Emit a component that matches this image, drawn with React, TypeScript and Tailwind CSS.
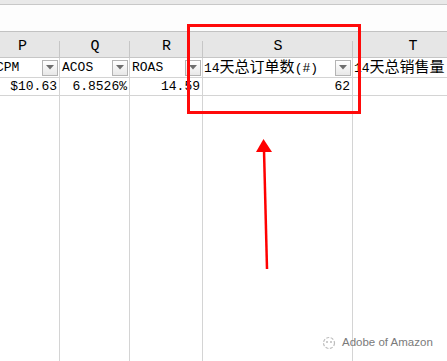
import React from "react";

const COLS = [
  { key: "P", w: "w-[75px]", pad: "pl-[11px]", head: "CPM", val: "$10.63" },
  { key: "Q", w: "w-[70px]", pad: "pl-[2px]", head: "ACOS", val: "6.8526%" },
  { key: "R", w: "w-[73px]", pad: "pl-[2px]", head: "ROAS", val: "14.59" },
  { key: "S", w: "w-[150px]", pad: "pl-[1px]", head: "14天总订单数(#)", val: "62" },
  { key: "T", w: "w-[120px]", pad: "pl-[1px]", head: "14天总销售量", val: "" },
];

const mono = "font-['Liberation_Mono','Noto_Sans_CJK_SC',monospace]";

// split latin / cjk so the cjk glyphs get the wider SimSun-like size
function MixedText({ text }: { text: string }) {
  const parts = text.match(/[\u4e00-\u9fff]+|[^\u4e00-\u9fff]+/g) || [];
  return (
    <>
      {parts.map((p, i) =>
        /[\u4e00-\u9fff]/.test(p) ? (
          <span key={i} className="font-['Noto_Sans_CJK_SC',sans-serif] text-[15px]">
            {p}
          </span>
        ) : (
          <span key={i}>{p}</span>
        )
      )}
    </>
  );
}

function FilterButton() {
  return (
    <div className="flex h-[16px] w-[16px] shrink-0 items-center justify-center border border-[#b4b4b4] bg-gradient-to-b from-[#ffffff] to-[#e8e8e8]">
      <svg width="8" height="5" viewBox="0 0 8 5">
        <path d="M0 0 L8 0 L4 4.5 Z" fill="#6e6e6e" />
      </svg>
    </div>
  );
}

export default function App() {
  return (
    <div className="relative flex h-[361px] w-[447px] flex-col overflow-hidden bg-white">
      {/* ribbon edge + formula bar */}
      <div className="h-[5px] shrink-0 border-b border-[#c8c8c8] bg-[#e9e9e9]" />
      <div className="h-[27px] shrink-0 border-b border-[#c2c2c2] bg-[#fdfdfd]" />

      <div className="ml-[-15px] flex shrink-0 flex-col">
        {/* column letters */}
        <div className="flex h-[26px] border-b border-[#c6c6c6] bg-[#e6e6e6]">
          {COLS.map((c) => (
            <div key={c.key} className={`${c.w} relative flex shrink-0 items-end justify-center pb-[1px]`}>
              <span className={`${mono} text-[15px] leading-[18px] text-black`}>{c.key}</span>
              <div className="absolute bottom-0 right-0 h-[16px] w-px bg-[#c6c6c6]" />
            </div>
          ))}
        </div>

        {/* filter header row */}
        <div className="flex h-[20px] border-b border-[#d4d4d4]">
          {COLS.map((c) => (
            <div
              key={c.key}
              className={`${c.w} ${c.pad} flex shrink-0 items-center justify-between overflow-hidden whitespace-nowrap border-r border-[#d4d4d4] pr-[1px] ${mono} text-[13px] leading-[18px] text-black`}
            >
              <span className="whitespace-nowrap">
                <MixedText text={c.head} />
              </span>
              {c.key !== "T" && <FilterButton />}
            </div>
          ))}
        </div>

        {/* data row */}
        <div className="flex h-[18px] border-b border-[#d4d4d4]">
          {COLS.map((c) => (
            <div
              key={c.key}
              className={`${c.w} flex shrink-0 items-center justify-end border-r border-[#d4d4d4] pr-[2px] ${mono} text-[13px] leading-[16px] text-black`}
            >
              {c.val}
            </div>
          ))}
        </div>
      </div>

      {/* empty rows below */}
      <div className="ml-[-15px] flex flex-1">
        {COLS.map((c) => (
          <div key={c.key} className={`${c.w} shrink-0 border-r border-[#d4d4d4]`} />
        ))}
      </div>

      {/* red highlight box */}
      <div className="absolute left-[187px] top-[24px] h-[90px] w-[174px] border-[3px] border-[#ff0a0a]" />

      {/* red arrow */}
      <svg className="absolute left-0 top-0" width="447" height="361" viewBox="0 0 447 361">
        <line x1="267" y1="269" x2="264" y2="150" stroke="#ff0000" strokeWidth="2.5" />
        <path d="M263.5 139 L272 152 L256 152 Z" fill="#ff0000" />
      </svg>

      {/* watermark */}
      <div className="absolute left-[322px] top-[334px] flex items-center gap-[5px]">
        <svg width="15" height="14" viewBox="0 0 15 14">
          <circle cx="7" cy="7" r="5.5" fill="none" stroke="#bdbdbd" strokeWidth="1.2" strokeDasharray="3 1.5" />
          <circle cx="5" cy="6" r="1" fill="#bdbdbd" />
          <circle cx="9" cy="6" r="1" fill="#bdbdbd" />
        </svg>
        <span className="font-['Liberation_Sans',Arial,sans-serif] text-[11.5px] text-[#7a7a7a]">Adobe of Amazon</span>
      </div>
    </div>
  );
}
